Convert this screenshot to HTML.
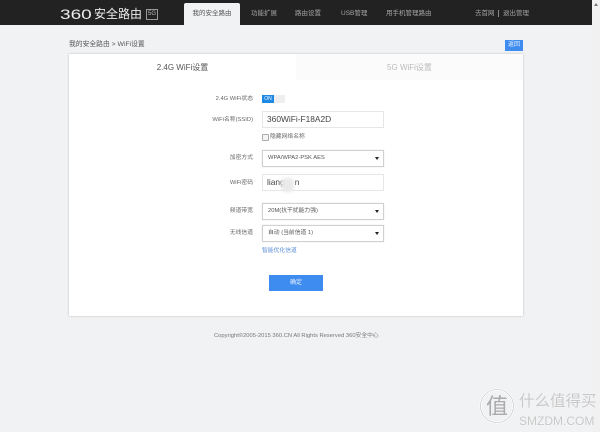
<!DOCTYPE html>
<html><head><meta charset="utf-8"><style>
html,body{margin:0;padding:0}
body{width:600px;height:432px;overflow:hidden;background:#f1f2f4;position:relative;font-family:"Liberation Sans","Noto Sans CJK SC",sans-serif;color:#555}
.a{position:absolute;white-space:nowrap}
.lab{font-size:5.8px;color:#666;text-align:right;width:83px;left:170px;line-height:10px}
.inp{left:262px;width:122px;box-sizing:border-box;background:#fff;border:1px solid #e6e6e6;font-size:8.4px;color:#444;padding-left:4px}
.sel{left:262px;width:122px;height:17px;box-sizing:border-box;background:#fff;border:1px solid #d0d0d0;box-shadow:0 0 1px #ddd;font-size:5.8px;color:#555;padding-left:5px;line-height:15px}
.sel:after{content:"";position:absolute;right:4px;top:6px;border:2.5px solid transparent;border-top:3px solid #222}
.nav{top:9px;font-size:6.5px;color:#a5a5a5;line-height:10px}
</style></head><body>
<div class="a" style="left:0;top:0;width:592px;height:25px;background:#222"></div>
<div class="a" style="left:60px;top:5px;font-size:14px;line-height:18px;color:#ececec;transform:scaleX(1.36);transform-origin:left">360</div>
<div class="a" style="left:94px;top:6px;font-size:12px;line-height:16px;color:#ececec">安全路由</div>
<div class="a" style="left:146px;top:9px;width:10px;height:9px;border:1px solid #999;font-size:6px;line-height:9px;text-align:center;color:#bbb">5G</div>
<div class="a" style="left:184px;top:3px;width:56px;height:22px;background:#f1f2f4;border-radius:2px 2px 0 0;font-size:6.5px;line-height:22px;text-align:center;color:#555">我的安全路由</div>
<div class="a nav" style="left:251px">功能扩展</div>
<div class="a nav" style="left:295px">路由设置</div>
<div class="a nav" style="left:341px">USB管理</div>
<div class="a nav" style="left:386px">用手机管理路由</div>
<div class="a nav" style="left:475px">去首网</div>
<div class="a" style="left:498px;top:10px;width:1px;height:7px;background:#888"></div>
<div class="a nav" style="left:503px">退出管理</div>

<div class="a" style="left:592px;top:0;width:8px;height:432px;background:#f1f1f1"></div>
<div class="a" style="left:594px;top:3px;border:2px solid transparent;border-bottom:3px solid #777;border-top:0"></div>

<div class="a" style="left:69px;top:40px;font-size:6.8px;line-height:10px;color:#555">我的安全路由 &gt; WiFi设置</div>
<div class="a" style="left:505px;top:40px;width:18px;height:11px;background:#3f8cf0;color:#e8f2ff;font-size:6px;line-height:11px;text-align:center">返回</div>

<div class="a" style="left:69px;top:54px;width:454px;height:262px;background:#fff;box-shadow:0 0 2px #bbb"></div>
<div class="a" style="left:296px;top:54px;width:227px;height:26px;background:#fbfbfb"></div>
<div class="a" style="left:69px;top:61px;width:227px;text-align:center;font-size:8px;line-height:13px;color:#555">2.4G WiFi设置</div>
<div class="a" style="left:296px;top:61px;width:227px;text-align:center;font-size:8px;line-height:13px;color:#bbb">5G WiFi设置</div>

<div class="a lab" style="top:94px">2.4G WiFi状态</div>
<div class="a" style="left:262px;top:95px;width:23px;height:8px;background:#eee"></div>
<div class="a" style="left:262px;top:95px;width:12px;height:8px;background:#1e88e5;color:#fff;font-size:5px;line-height:8px;text-align:center">ON</div>

<div class="a lab" style="top:115px">WiFi名称(SSID)</div>
<div class="a inp" style="top:111px;height:17px;line-height:15px">360WiFi-F18A2D</div>
<div class="a" style="left:262px;top:134px;width:5px;height:5px;border:1px solid #aaa;background:#f4f4f4;border-radius:1px"></div>
<div class="a" style="left:270px;top:132px;font-size:5.8px;line-height:10px;color:#666">隐藏网络名称</div>

<div class="a lab" style="top:153px">加密方式</div>
<div class="a sel" style="top:150px">WPA/WPA2-PSK AES</div>

<div class="a lab" style="top:178px">WiFi密码</div>
<div class="a inp" style="top:174px;height:17px;line-height:15px">liang<span style="display:inline-block;width:10px"></span>n</div>
<div class="a" style="left:281px;top:178px;width:13px;height:14px;background:#eaeaea;border-radius:4px;filter:blur(1.5px)"></div>

<div class="a lab" style="top:206px">频道带宽</div>
<div class="a sel" style="top:203px">20M(抗干扰能力强)</div>
<div class="a lab" style="top:228px">无线信道</div>
<div class="a sel" style="top:225px">自动 (当前信道 1)</div>
<div class="a" style="left:262px;top:246px;font-size:5.8px;line-height:10px;color:#5b8fd9">智能优化信道</div>

<div class="a" style="left:269px;top:275px;width:54px;height:16px;background:#3f8cf0;color:#e8f2ff;font-size:6px;line-height:16px;text-align:center">确定</div>

<div class="a" style="left:214px;top:331px;font-size:5.8px;line-height:10px;color:#777">Copyright©2005-2015 360.CN All Rights Reserved 360安全中心</div>

<svg class="a" style="left:478px;top:387px" width="40" height="40" viewBox="0 0 40 40"><circle cx="19" cy="19" r="16.5" fill="none" stroke="#fff" stroke-width="2"/><circle cx="19" cy="19" r="16.5" fill="none" stroke="#bbb" stroke-width=".6"/><text x="19" y="27" font-size="22" text-anchor="middle" fill="#aaa" font-family="Noto Sans CJK SC">值</text></svg>
<div class="a" style="left:519px;top:392px;font-size:15.5px;line-height:20px;color:#c8c8c8;text-shadow:0 0 1px #fff">什么值得买</div>
<div class="a" style="left:519px;top:414px;font-size:12px;line-height:14px;color:#c8c8c8;text-shadow:0 0 1px #fff">SMZDM.COM</div>
</body></html>
